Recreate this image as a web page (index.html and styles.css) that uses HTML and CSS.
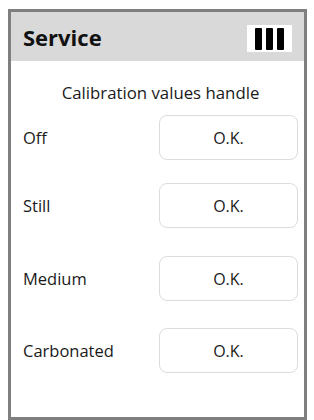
FILE: index.html
```html
<!DOCTYPE html>
<html lang="en">
<head>
    <meta charset="UTF-8">
    <meta name="viewport" content="width=device-width, initial-scale=1.0">
    <title>Service</title>
    <link rel="stylesheet" href="styles.css">
</head>
<body>
    <div class="service-panel">
        <div class="panel-header">
            <h1>Service</h1>
            <div class="menu-icon">
                <span></span><span></span><span></span>
            </div>
        </div>
        <div class="panel-body">
            <p class="subtitle">Calibration values handle</p>
            <div class="calib-row">
                <span class="calib-label">Off</span>
                <button class="ok-btn">O.K.</button>
            </div>
            <div class="calib-row">
                <span class="calib-label">Still</span>
                <button class="ok-btn">O.K.</button>
            </div>
            <div class="calib-row">
                <span class="calib-label">Medium</span>
                <button class="ok-btn">O.K.</button>
            </div>
            <div class="calib-row">
                <span class="calib-label">Carbonated</span>
                <button class="ok-btn">O.K.</button>
            </div>
        </div>
    </div>
</body>
</html>
```

FILE: styles.css
```css
* {
    box-sizing: border-box;
}
body {
    margin: 0;
    background: #fff;
    font-family: "Open Sans", "Noto Sans", sans-serif;
    color: #1a1a1a;
}
.service-panel {
    margin: 9px 0 0 8px;
    width: 299px;
    height: 411px;
    border: 3px solid #7f7f7f;
    display: flex;
    flex-direction: column;
}
.panel-header {
    height: 49px;
    background: #d9d9d9;
    display: flex;
    align-items: center;
    justify-content: space-between;
    padding: 0 12px 0 12px;
}
.panel-header h1 {
    margin: 0;
    font-size: 22px;
    font-weight: bold;
    color: #111;
}
.menu-icon {
    width: 45px;
    height: 27px;
    margin-top: 4px;
    background: #fff;
    display: flex;
    justify-content: center;
    align-items: center;
    gap: 4px;
}
.menu-icon span {
    width: 7px;
    height: 22px;
    background: #000;
    border-radius: 1px;
}
.panel-body {
    padding: 0 6px 0 12px;
}
.subtitle {
    margin: 21px 0 11px;
    text-align: center;
    font-size: 16.8px;
    line-height: 22px;
}
.calib-row {
    display: flex;
    align-items: center;
    justify-content: space-between;
    height: 45px;
    margin-bottom: 27px;
}
.calib-row:nth-child(2) {
    margin-bottom: 23px;
}
.calib-row:nth-child(3) {
    margin-bottom: 28px;
}
.calib-label {
    font-size: 16.5px;
}
.ok-btn {
    width: 139px;
    height: 45px;
    background: #fff;
    border: 1.5px solid #dcdcdc;
    border-radius: 8px;
    font-family: inherit;
    font-size: 16px;
    color: #1a1a1a;
}
```
